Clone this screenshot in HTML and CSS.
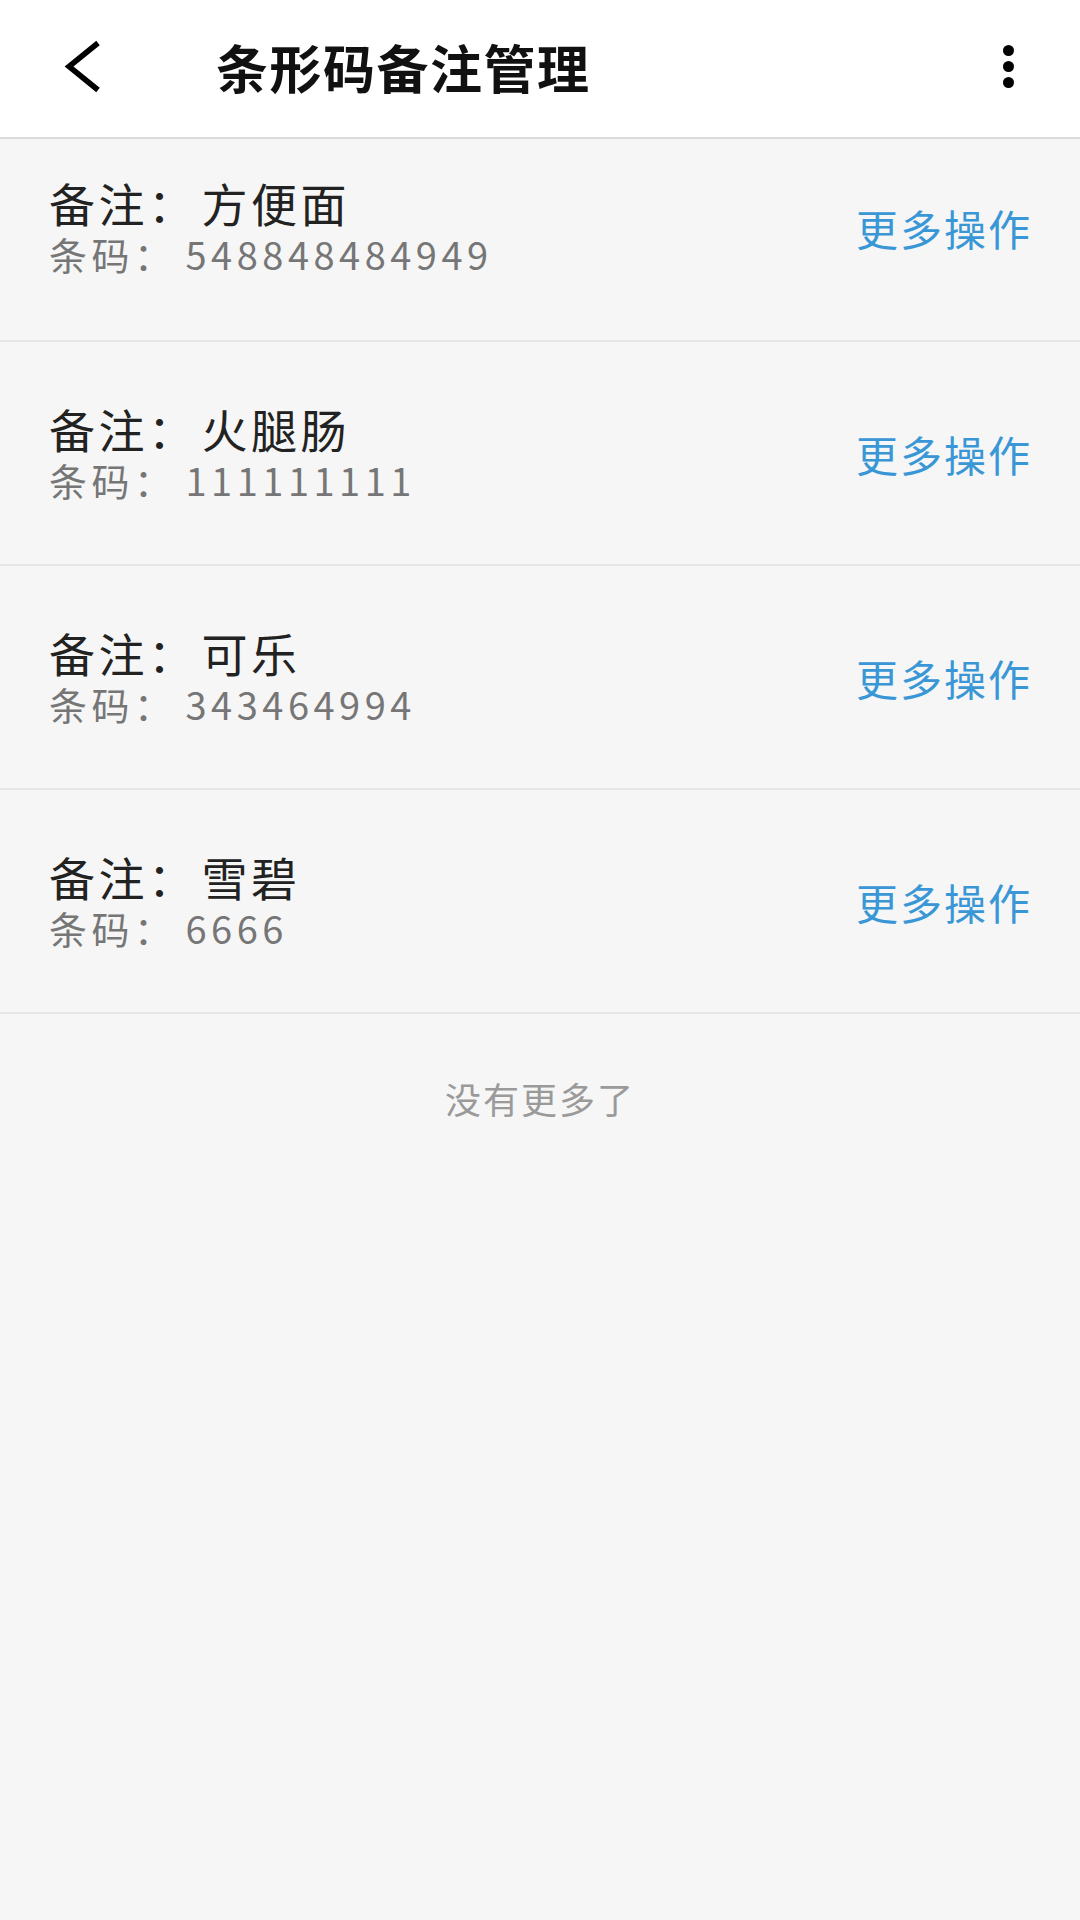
FILE: index.html
```html
<!DOCTYPE html>
<html lang="zh-CN">
<head>
    <meta charset="UTF-8">
    <meta name="viewport" content="width=device-width, initial-scale=1.0">
    <title>条形码备注管理</title>
    <link rel="stylesheet" href="styles.css">
</head>
<body>
    <div class="header">
        <div class="back">
            <svg width="44" height="56" viewBox="0 0 44 56">
                <path d="M38 4 L9 27.5 L38 51" fill="none" stroke="#000" stroke-width="5.5"/>
            </svg>
        </div>
        <h1 class="title">条形码备注管理</h1>
        <div class="more">
            <span class="dot"></span>
            <span class="dot"></span>
            <span class="dot"></span>
        </div>
    </div>

    <ul class="list">
        <li class="item">
            <div class="info">
                <p class="note"><span class="label">备注：</span><span class="value">方便面</span></p>
                <p class="code"><span class="label">条码：</span><span class="value">548848484949</span></p>
            </div>
            <a class="action">更多操作</a>
        </li>
        <li class="item">
            <div class="info">
                <p class="note"><span class="label">备注：</span><span class="value">火腿肠</span></p>
                <p class="code"><span class="label">条码：</span><span class="value">111111111</span></p>
            </div>
            <a class="action">更多操作</a>
        </li>
        <li class="item">
            <div class="info">
                <p class="note"><span class="label">备注：</span><span class="value">可乐</span></p>
                <p class="code"><span class="label">条码：</span><span class="value">343464994</span></p>
            </div>
            <a class="action">更多操作</a>
        </li>
        <li class="item">
            <div class="info">
                <p class="note"><span class="label">备注：</span><span class="value">雪碧</span></p>
                <p class="code"><span class="label">条码：</span><span class="value">6666</span></p>
            </div>
            <a class="action">更多操作</a>
        </li>
    </ul>

    <p class="no-more">没有更多了</p>
</body>
</html>
```

FILE: styles.css
```css
body {
    font-family: "Noto Sans CJK SC", "Noto Sans", sans-serif;
    background-color: #f6f6f6;
    margin: 0;
    padding: 0;
}
.header {
    display: flex;
    align-items: center;
    height: 137px;
    background-color: #fff;
    border-bottom: 2px solid #d9d9d9;
}
.back {
    display: flex;
    align-items: center;
    width: 60px;
    margin-left: 60px;
    margin-top: -3px;
}
.title {
    flex: 1;
    margin: -4px 0 0 96px;
    font-size: 52px;
    font-weight: 700;
    letter-spacing: 1.5px;
    color: #111;
}
.more {
    display: flex;
    flex-direction: column;
    align-items: center;
    gap: 5px;
    margin-right: 66px;
    margin-top: -4px;
}
.dot {
    width: 11px;
    height: 11px;
    border-radius: 50%;
    background-color: #000;
}
.list {
    list-style: none;
    margin: 0;
    padding: 0;
}
.item {
    display: flex;
    align-items: center;
    justify-content: space-between;
    height: 222px;
    padding: 0 48px 0 49px;
    border-bottom: 2px solid #e6e6e6;
}
.item:first-child {
    height: 176px;
    padding-bottom: 25px;
}
.info p {
    display: flex;
    margin: 0;
}
.info .label,
.info .value {
    display: block;
}
.note {
    font-size: 46px;
    line-height: 54px;
    letter-spacing: 3.5px;
    color: #222;
}
.code {
    font-size: 38px;
    line-height: 50px;
    letter-spacing: 4.5px;
    color: #767676;
}
.note .value {
    margin-left: 4px;
}
.code .value {
    margin-left: 9px;
}
.action {
    font-size: 42px;
    letter-spacing: 2px;
    color: #3a97d6;
    cursor: pointer;
}
.no-more {
    margin: 0;
    padding-top: 60px;
    line-height: 48px;
    text-align: center;
    font-size: 36px;
    letter-spacing: 2px;
    color: #9a9a9a;
}
```
